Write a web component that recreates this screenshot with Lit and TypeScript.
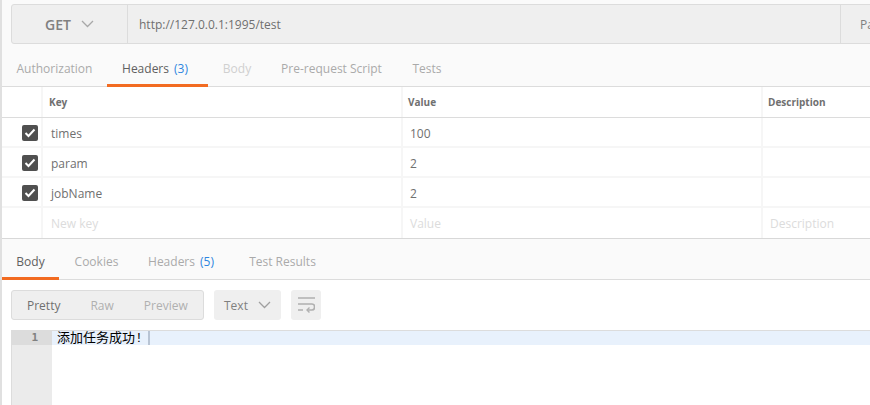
import { LitElement, html, css } from "lit";
import { customElement } from "lit/decorators.js";

const rows = [
  { k: "times", v: "100" },
  { k: "param", v: "2" },
  { k: "jobName", v: "2" },
];

@customElement("app-root")
export class AppRoot extends LitElement {
  static styles = css`
    :host { display: block; width: 870px; height: 405px; overflow: hidden; background: #fafafa; font-family: "Open Sans", "Noto Sans CJK SC", sans-serif; font-size: 12px; color: #808080; }
    * { box-sizing: border-box; }
    .page { height: 405px; border-left: 2px solid #e0e0e0; display: flex; flex-direction: column; padding-top: 4px; width: 870px; overflow: hidden; }
    .urlbar { margin-left: 9px; width: 890px; flex: none; height: 40px; display: flex; background: #efefef; border: 1px solid #dcdcdc; border-radius: 3px 0 0 3px; }
    .method { width: 116px; flex: none; border-right: 1px solid #dcdcdc; display: flex; align-items: center; padding-left: 33px; gap: 10px; font-size: 14px; font-weight: 600; color: #808080; }
    .url { flex: 1; display: flex; align-items: center; padding-left: 11px; color: #707070; font-size: 12px; }
    .pa { width: 60px; flex: none; border-left: 1px solid #dcdcdc; display: flex; align-items: center; padding-left: 19px; color: #808080; overflow: hidden; white-space: nowrap; }
    .tabs { flex: none; display: flex; }
    .req { height: 43px; border-bottom: 1px solid #dcdcdc; }
    .res { height: 41px; border-bottom: 1px solid #dcdcdc; }
    .tab { display: flex; align-items: center; justify-content: center; white-space: nowrap; color: #a0a0a0; border-bottom: 3px solid transparent; margin-bottom: -1px; padding-top: 6px; }
    .req .tab { padding-top: 8px; }
    .tab.on { color: #606060; border-bottom-color: #f26b21; }
    .tab.dim { color: #d0d0d0; }
    .tab.gray { color: #aaa; }
    .tab.w1 { width: 105px; }
    .tab.w2 { width: 101px; padding-right: 5px; }
    .tab.w3 { width: 58px; }
    .tab.w4 { width: 131px; }
    .tab.w5 { width: 60px; }
    .tab.r1 { width: 57px; }
    .tab.r2 { width: 75px; }
    .tab.r3 { width: 94px; }
    .tab.r4 { width: 109px; }
    .count { color: #2f86e0; margin-left: 5px; }
    .table { flex: none; background: #fff; border-bottom: 1px solid #d8d8d8; }
    .tr { display: grid; grid-template-columns: 39px 2px 358px 2px 358px 2px 1fr; height: 30px; border-bottom: 2px solid #f6f6f6; }
    .tr.head { height: 31px; border-bottom: 1px solid #dcdcdc; font-size: 10px; font-weight: 700; color: #707070; }
    .tr.last { border-bottom: none; height: 30px; }
    .sep { background: #f6f6f6; }
    .cell { display: flex; align-items: center; padding-left: 7px; padding-top: 3px; white-space: nowrap; overflow: hidden; color: #707070; }
    .cell.first { padding-left: 8px; }
    .head .cell { padding-left: 5px; padding-top: 0; color: #707070; }
    .head .cell.first { padding-left: 6px; }
    .last .cell { padding-top: 1px; }
    .cell.ph { color: #dcdcdc; }
    .chk { display: flex; align-items: center; justify-content: flex-start; padding-left: 20px; padding-top: 2px; }
    .box { width: 16px; height: 16px; border-radius: 2px; background: #505050; display: flex; align-items: center; justify-content: center; }
    .tools { background: #fff; display: flex; flex-direction: column; flex: 1; }
    .toolbar { display: flex; margin: 10px 0 0 9px; height: 30px; flex: none; }
    .seg { width: 193px; height: 30px; background: #efefef; border: 1px solid #dcdcdc; border-radius: 3px; display: flex; align-items: center; padding-left: 15px; gap: 30px; color: #b0b0b0; }
    .seg .a { color: #707070; }
    .sel { margin-left: 10px; width: 67px; height: 30px; border-radius: 3px; background: #efefef; display: flex; align-items: center; padding-left: 10px; gap: 10px; color: #808080; }
    .wrapb { margin-left: 10px; width: 30px; height: 30px; border-radius: 3px; background: #efefef; display: flex; align-items: center; justify-content: center; }
    .editor { margin: 10px 0 0 9px; flex: 1; display: grid; grid-template-columns: 40px 1fr; border-top: 1px solid #dcdcdc; border-left: 1px solid #dcdcdc; min-height: 0; }
    .gutter { background: #ebebeb; }
    .ln { height: 14px; background: #dcdcdc; color: #808080; font-weight: 700; font-size: 11px; line-height: 14px; text-align: right; padding-right: 14px; font-family: "DejaVu Sans Mono", monospace; }
    .line { height: 14px; background: #e8f1fc; display: flex; align-items: center; padding-left: 5px; padding-bottom: 3px; color: #000; font-size: 13px; font-family: "Liberation Mono", "Noto Sans CJK SC", monospace; }
    .caret { width: 2px; height: 14px; background: #b8c4d4; margin-left: 5px; margin-bottom: -3px; }
    .code { background: #fff; }
  `;

  render() {
    return html`<div class="page">
      <div class="urlbar">
        <div class="method">GET
          <svg width="13" height="8" viewBox="0 0 13 8"><path d="M1 1l5.5 5.5L12 1" fill="none" stroke="#a8a8a8" stroke-width="1.3"/></svg>
        </div>
        <div class="url">http://127.0.0.1:1995/test</div>
        <div class="pa">Params</div>
      </div>
      <div class="tabs req">
        <div class="tab gray w1">Authorization</div>
        <div class="tab on w2">Headers <span class="count">(3)</span></div>
        <div class="tab dim w3">Body</div>
        <div class="tab gray w4">Pre-request Script</div>
        <div class="tab gray w5">Tests</div>
      </div>
      <div class="table">
        <div class="tr head">
          <div></div><div class="sep"></div><div class="cell first">Key</div><div class="sep"></div><div class="cell">Value</div><div class="sep"></div><div class="cell">Description</div>
        </div>
        ${rows.map(
          (r) => html`<div class="tr">
            <div class="chk"><div class="box"><svg width="12" height="10" viewBox="0 0 12 10"><path d="M1.5 5l3 3 6-6.5" fill="none" stroke="#fff" stroke-width="2"/></svg></div></div>
            <div class="sep"></div><div class="cell first">${r.k}</div><div class="sep"></div><div class="cell">${r.v}</div><div class="sep"></div><div class="cell"></div>
          </div>`
        )}
        <div class="tr last">
          <div></div><div class="sep"></div><div class="cell first ph">New key</div><div class="sep"></div><div class="cell ph">Value</div><div class="sep"></div><div class="cell ph">Description</div>
        </div>
      </div>
      <div class="tabs res">
        <div class="tab on r1">Body</div>
        <div class="tab gray r2">Cookies</div>
        <div class="tab gray r3">Headers <span class="count">(5)</span></div>
        <div class="tab gray r4">Test Results</div>
      </div>
      <div class="tools">
        <div class="toolbar">
          <div class="seg"><span class="a">Pretty</span><span>Raw</span><span>Preview</span></div>
          <div class="sel">Text
            <svg width="13" height="8" viewBox="0 0 13 8"><path d="M1 1l5.5 5.5L12 1" fill="none" stroke="#a0a0a0" stroke-width="1.3"/></svg>
          </div>
          <div class="wrapb">
            <svg width="17" height="16" viewBox="0 0 17 16"><path d="M0 1h17M0 7h14c3.500 0 3.500 6 0 6H9M0 13h5" fill="none" stroke="#b0b0b0" stroke-width="1.7"/><path d="M11.500 10.500L9 13l2.500 2.500" fill="none" stroke="#b0b0b0" stroke-width="1.4"/></svg>
          </div>
        </div>
        <div class="editor">
          <div class="gutter"><div class="ln">1</div></div>
          <div class="code"><div class="line">添加任务成功!<span class="caret"></span></div></div>
        </div>
      </div>
    </div>`;
  }
}
